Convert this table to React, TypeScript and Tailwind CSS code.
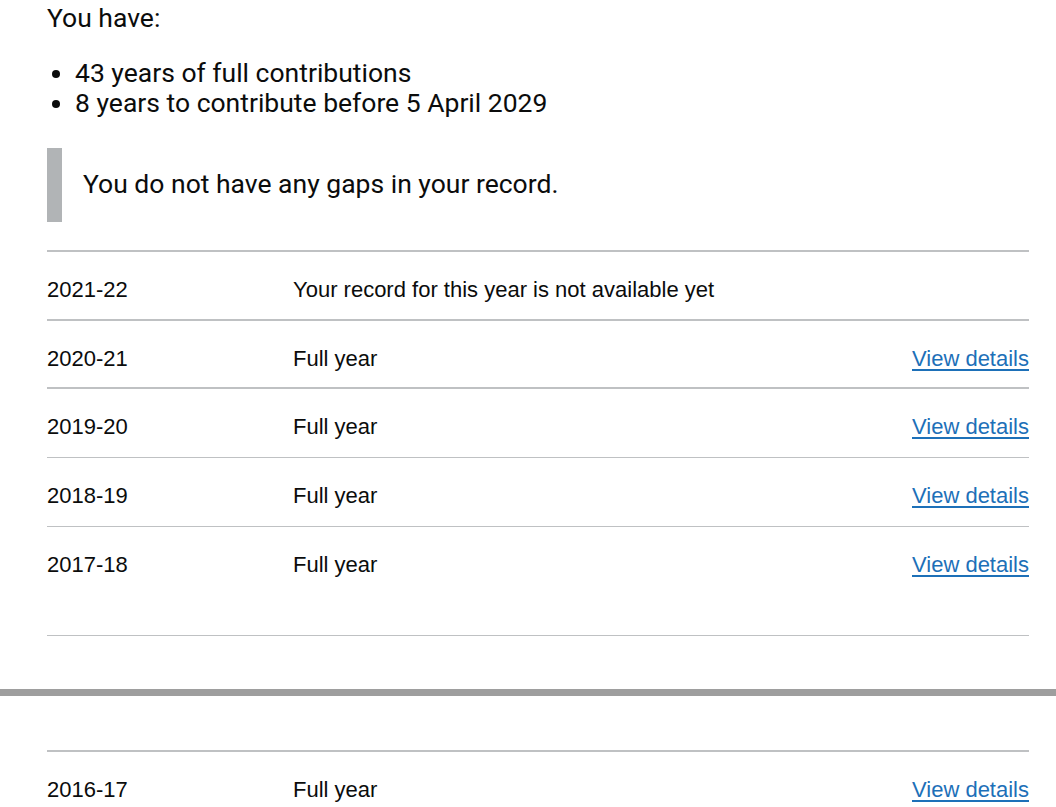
const rows = [
  { year: '2021-22', status: 'Your record for this year is not available yet', link: false, h: 'h-[69px] border-b-2' },
  { year: '2020-21', status: 'Full year', link: true, h: 'h-[68px] border-b-2' },
  { year: '2019-20', status: 'Full year', link: true, h: 'h-[69px] border-b' },
  { year: '2018-19', status: 'Full year', link: true, h: 'h-[69px] border-b' },
  { year: '2017-18', status: 'Full year', link: true, h: 'h-[109px] border-b' },
]

function YearRow({ year, status, link, h }: { year: string; status: string; link: boolean; h: string }) {
  return (
    <div className={`flex items-start border-[#bfc1c3] ${h}`}>
      <div className="w-[246px] pt-[24px]">{year}</div>
      <div className="flex-1 pt-[24px]">{status}</div>
      {link && (
        <a href="#" className="pt-[24px] text-[#1d70b8] underline decoration-2 underline-offset-[3px]">
          View details
        </a>
      )}
    </div>
  )
}

export default function App() {
  return (
    <div className="min-h-screen bg-white text-[#0b0c0c] font-['Roboto',sans-serif]">
      <div className="pl-[47px] pr-[27px] pt-[3px] text-[26.5px] leading-[30px]">
        <p>You have:</p>
        <ul className="mt-[25px] list-disc pl-[28px]">
          <li>43 years of full contributions</li>
          <li>8 years to contribute before 5 April 2029</li>
        </ul>
        <div className="mt-[30px] flex h-[74px] items-center border-l-[15px] border-[#b1b4b6] pl-[21px] pb-[3px]">
          You do not have any gaps in your record.
        </div>
      </div>

      <div className="ml-[47px] mr-[27px] mt-[28px] border-t-2 border-[#bfc1c3] font-['Liberation_Sans',Arial,sans-serif] text-[22px] leading-[28px]">
        {rows.map((r) => (
          <YearRow key={r.year} {...r} />
        ))}
      </div>

      <div className="mt-[53px] h-[7px] bg-[#9e9e9e]" />

      <div className="ml-[47px] mr-[27px] mt-[54px] border-t-2 border-[#bfc1c3] font-['Liberation_Sans',Arial,sans-serif] text-[22px] leading-[28px]">
        <YearRow year="2016-17" status="Full year" link h="h-[69px]" />
      </div>
    </div>
  )
}
